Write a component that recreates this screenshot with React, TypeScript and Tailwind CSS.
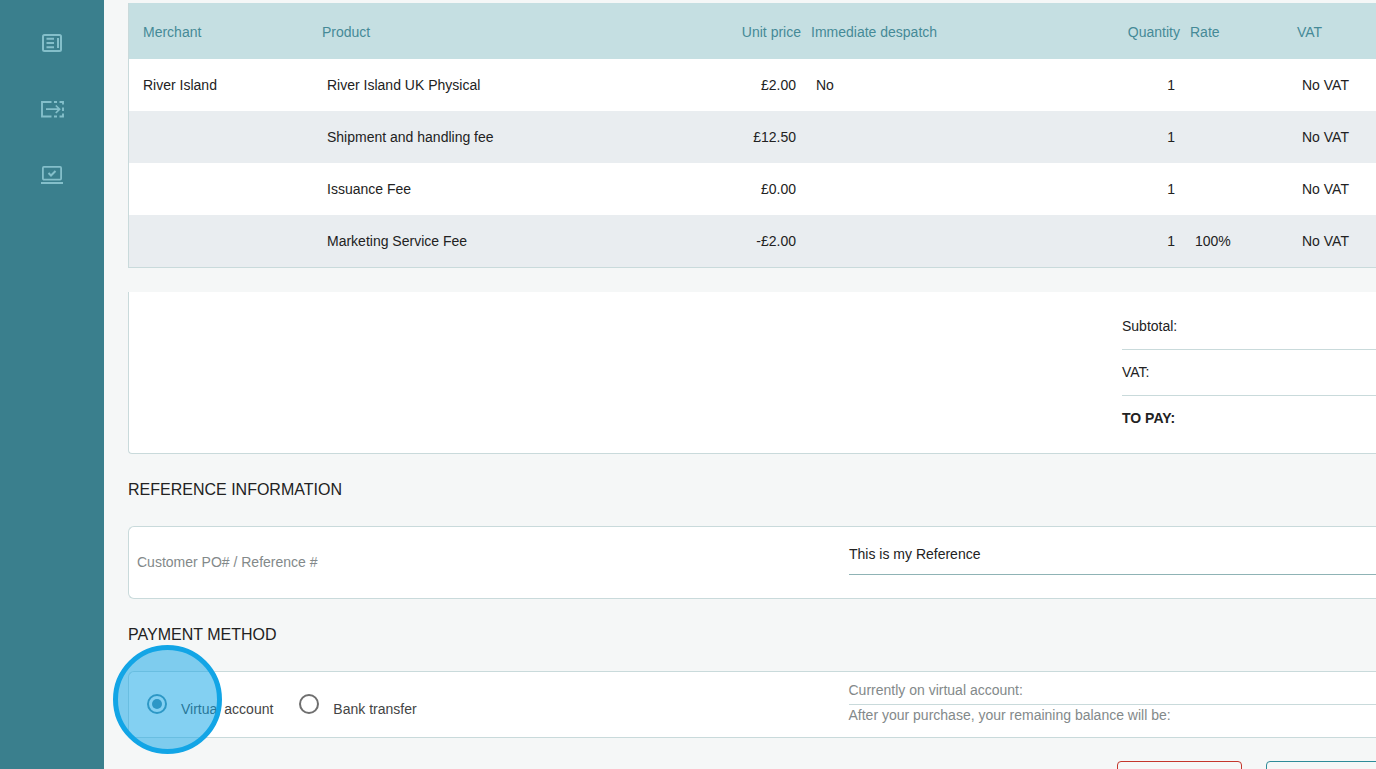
const rows = [
  { merchant: "River Island", product: "River Island UK Physical", price: "£2.00", despatch: "No", qty: "1", rate: "", vat: "No VAT" },
  { merchant: "", product: "Shipment and handling fee", price: "£12.50", despatch: "", qty: "1", rate: "", vat: "No VAT" },
  { merchant: "", product: "Issuance Fee", price: "£0.00", despatch: "", qty: "1", rate: "", vat: "No VAT" },
  { merchant: "", product: "Marketing Service Fee", price: "-£2.00", despatch: "", qty: "1", rate: "100%", vat: "No VAT" },
]

const columns = "grid grid-cols-[178px_333px_166px_272px_107px_107px_213px] items-center"

export default function App() {
  return (
    <div className="relative flex h-[769px] w-full overflow-hidden bg-[#f5f7f7] font-['Liberation_Sans',Arial,sans-serif] text-[14px] text-[#222222]">
      {/* Sidebar */}
      <aside className="flex w-[104px] shrink-0 flex-col items-center bg-[#3a7f8d] pt-[31px] text-[#84bfca]">
        <svg className="h-[24px] w-[24px]" viewBox="0 0 24 24" fill="none" stroke="currentColor" strokeWidth="2">
          <rect x="3" y="4" width="18" height="16" rx="1.5" />
          <path d="M6.5 7.8h7.5M6.5 12h7.5M6.5 16.2h7.5M18 7v10" />
        </svg>
        <svg className="mt-[42px] h-[24px] w-[24px]" viewBox="0 0 24 24" fill="none" stroke="currentColor" strokeWidth="1.9">
          <path d="M11.5 5H2v14.5h9.5" />
          <path d="M6 12.2h13.5M15.8 8.5l3.8 3.7-3.8 3.8" strokeWidth="1.7" />
          <path d="M14 5h3M19.5 5H23v2.5M23 10.5v3.5M23 16.5v3h-3.5M17 19.5h-3" />
        </svg>
        <svg className="mt-[41px] h-[24px] w-[24px]" viewBox="0 0 24 24" fill="none" stroke="currentColor" strokeWidth="1.8">
          <rect x="2.9" y="4.9" width="18.2" height="12.7" rx="1" />
          <path d="M1 21h22" strokeWidth="2" />
          <path d="M8.5 11l2.5 2.5 4.5-4.5" strokeWidth="2" />
        </svg>
      </aside>

      {/* Main content */}
      <main className="w-[1376px] shrink-0 pl-[24px] pt-[3px]">
        <div className="w-[1376px]">
          {/* Products table */}
          <section className="border-b border-l border-[#c9dadb]">
            <div className={`${columns} h-[56px] bg-[#c5dfe2] pt-[2px] text-[#458a97]`}>
              <div className="pl-[14px]">Merchant</div>
              <div className="pl-[15px]">Product</div>
              <div className="pr-[5px] text-right">Unit price</div>
              <div className="pl-[5px]">Immediate despatch</div>
              <div className="pr-[5px] text-right">Quantity</div>
              <div className="pl-[5px]">Rate</div>
              <div className="pl-[5px]">VAT</div>
            </div>
            {rows.map((row, i) => (
              <div key={row.product} className={`${columns} h-[52px] ${i % 2 === 0 ? "bg-white" : "bg-[#e9edf0]"}`}>
                <div className="pl-[14px]">{row.merchant}</div>
                <div className="pl-[20px]">{row.product}</div>
                <div className="pr-[10px] text-right">{row.price}</div>
                <div className="pl-[10px]">{row.despatch}</div>
                <div className="pr-[10px] text-right">{row.qty}</div>
                <div className="pl-[10px]">{row.rate}</div>
                <div className="pl-[10px]">{row.vat}</div>
              </div>
            ))}
          </section>

          {/* Totals */}
          <section className="mt-[24px] flex h-[162px] justify-end rounded-bl-[4px] border-b border-l border-[#c9dadb] bg-white pt-[11px]">
            <div className="w-[382px]">
              <div className="flex h-[47px] items-center border-b border-[#c9dadb]">Subtotal:</div>
              <div className="flex h-[46px] items-center border-b border-[#c9dadb]">VAT:</div>
              <div className="flex h-[45px] items-center font-bold">TO PAY:</div>
            </div>
          </section>

          <h2 className="mt-[26px] h-[19px] text-[16px] leading-[19px]">REFERENCE INFORMATION</h2>

          {/* Reference */}
          <section className="mt-[27px] flex h-[73px] rounded-l-[6px] border border-r-0 border-[#c9dadb] bg-white">
            <div className="flex w-[720px] items-center pl-[8px] text-[#83898a]">Customer PO# / Reference #</div>
            <div className="flex-1 pt-[18px]">
              <div className="h-[30px] border-b border-[#8fb3b5] leading-[19px]">This is my Reference</div>
            </div>
          </section>

          <h2 className="mt-[26px] h-[19px] text-[16px] leading-[19px]">PAYMENT METHOD</h2>

          {/* Payment method */}
          <section className="mt-[27px] flex h-[67px] rounded-l-[6px] border border-r-0 border-[#c9dadb] bg-white">
            <div className="flex w-[719.5px] pl-[18px] pt-[22px]">
              <span className="flex h-[20px] w-[20px] items-center justify-center rounded-full border-2 border-[#4d8aa3]">
                <span className="h-[10px] w-[10px] rounded-full bg-[#4c88a4]" />
              </span>
              <span className="ml-[14px] mt-[6px] leading-[19px] text-[#444444]">Virtual account</span>
              <span className="ml-[26px] h-[20px] w-[20px] rounded-full border-2 border-[#6f6f6f]" />
              <span className="ml-[14px] mt-[6px] leading-[19px] text-[#444444]">Bank transfer</span>
            </div>
            <div className="flex-1 text-[#83898a]">
              <div className="h-[33px] border-b border-[#c9dadb] pt-[9px] leading-[19px]">Currently on virtual account:</div>
              <div className="pt-[1px] leading-[19px]">After your purchase, your remaining balance will be:</div>
            </div>
          </section>

          {/* Actions */}
          <div className="ml-[989px] mt-[23px] flex gap-[24px]">
            <button type="button" className="h-[40px] w-[125px] rounded-[4px] border border-[#c4362b]" />
            <button type="button" className="h-[40px] w-[125px] rounded-[4px] border border-[#2e8b99]" />
          </div>
        </div>
      </main>

      {/* Click highlight */}
      <div className="absolute left-[113px] top-[645px] h-[109px] w-[109px] rounded-full border-[5px] border-[#12a5e6] bg-[#12a5e6]/[0.52]" />
    </div>
  )
}
